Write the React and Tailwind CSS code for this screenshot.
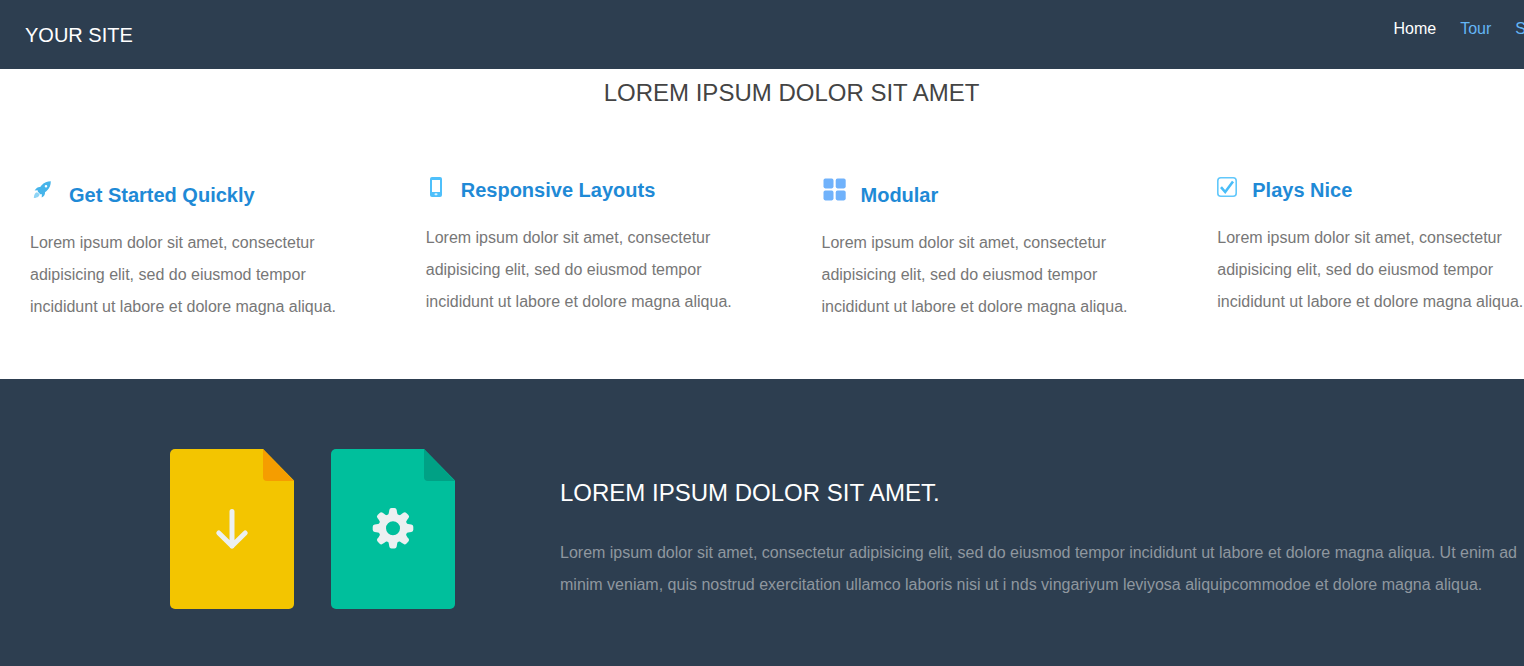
import React from "react";

function RocketIcon() {
  return (
    <svg viewBox="0 -1 24 24" className="h-6 w-6 shrink-0" aria-hidden="true">
      <path
        fillRule="evenodd"
        fill="#46b4ea"
        d="M20.8 3.2c-3.4.1-6.800 1-9.400 4.200L10.200 9C8.100 8.800 6.400 9.800 4.600 12.400l3-.1.3 1.500 2.400 2.400 1.600.1-.2 3.300c2.600-1.500 3.500-3.300 3.300-5.400l1.600-1.300c3.200-2.700 4.200-5.900 4.200-9.700zM16 7a1.300 1.300 0 1 1 0 2.600 1.300 1.300 0 0 1 0-2.600z"
      />
      <path fill="#8fd4f5" d="M7 14.200c-1.900.3-3 2.200-3.200 5.800 1 .2 1.700-.1 2.400-.5 1.300-.1 2-.6 2.500-1.300.6-.6.900-1.300.9-2.200z" />
    </svg>
  );
}

function PhoneIcon() {
  return (
    <svg viewBox="0 0 20 24" className="h-6 w-5 shrink-0" aria-hidden="true">
      <rect x="4" y="0" width="12" height="20" rx="2" fill="#4fc0fb" />
      <rect x="6" y="3" width="8" height="12" fill="#fff" />
      <rect x="8.500" y="16.300" width="3" height="2" rx="1" fill="#d8f2ff" />
    </svg>
  );
}

function GridIcon() {
  return (
    <svg viewBox="0 0 24 24" className="h-6 w-6 shrink-0" aria-hidden="true" fill="#70b2fb">
      <rect x="1.500" y="1.600" width="10" height="9.800" rx="1.800" />
      <rect x="13.700" y="1.600" width="10" height="9.800" rx="1.800" />
      <rect x="1.500" y="13.600" width="10" height="9.800" rx="1.800" />
      <rect x="13.700" y="13.600" width="10" height="9.800" rx="1.800" />
    </svg>
  );
}

function CheckIcon() {
  return (
    <svg viewBox="0 0 20 24" className="h-6 w-5 shrink-0" aria-hidden="true" fill="none">
      <rect x="0.800" y="0.800" width="18.400" height="18.400" rx="3" stroke="#62c8fb" strokeWidth="1.600" />
      <path d="M4 10.200l4.200 4.800 7.800-10.500" stroke="#49bdf8" strokeWidth="2.600" />
    </svg>
  );
}

function Sheet({ body, fold, children }) {
  return (
    <svg viewBox="0 0 124 160" className="h-40 w-[124px] shrink-0" aria-hidden="true">
      <path d="M5 0h88L124 31.500V155a5 5 0 0 1-5 5H5a5 5 0 0 1-5-5V5a5 5 0 0 1 5-5z" fill={body} />
      <path d="M93 0L124 32H97a4 4 0 0 1-4-4z" fill={fold} />
      {children}
    </svg>
  );
}

const teeth = [0, 45, 90, 135, 180, 225, 270, 315];

const blurb =
  "Lorem ipsum dolor sit amet, consectetur adipisicing elit, sed do eiusmod tempor incididunt ut labore et dolore magna aliqua.";

const features = [
  { title: "Get Started Quickly", Icon: RocketIcon, low: true },
  { title: "Responsive Layouts", Icon: PhoneIcon, low: false },
  { title: "Modular", Icon: GridIcon, low: true },
  { title: "Plays Nice", Icon: CheckIcon, low: false },
];

function Feature({ title, Icon, low }) {
  return (
    <article className="px-[30px]">
      <div className="flex items-start gap-[15px]">
        <Icon />
        <h3 className={low ? "pt-1 text-[20px] leading-7 font-bold text-[#1f8ad6]" : "text-[20px] leading-[27px] font-bold text-[#1f8ad6]"}>
          {title}
        </h3>
      </div>
      <p className="mt-[18px] text-[16px] leading-8 text-[#777]">{blurb}</p>
    </article>
  );
}

export default function App() {
  return (
    <div className="overflow-hidden bg-white font-['Liberation_Sans',Arial,sans-serif]">
      <div className="-mr-[59px]">
        <header className="flex items-start justify-between bg-[#2d3e50] pr-[57px] pl-[25px]">
          <a href="#" className="pt-5 pb-[19px] text-[20px] leading-[30px] text-white">
            YOUR SITE
          </a>
          <nav className="flex gap-6 pt-[17px] text-[16px] leading-6 text-[#64b5f6]">
            <a href="#" className="text-white">Home</a>
            <a href="#">Tour</a>
            <a href="#">S</a>
          </nav>
        </header>

        <main>
          <section className="pt-2 pb-14">
            <h2 className="text-center text-[24px] leading-8 text-[#444]">LOREM IPSUM DOLOR SIT AMET</h2>
            <div className="mt-[68px] grid grid-cols-4">
              {features.map((f) => (
                <Feature key={f.title} {...f} />
              ))}
            </div>
          </section>

          <section className="flex items-start bg-[#2d3e50] pt-[70px] pr-[30px] pb-20 pl-[170px]">
            <div className="flex shrink-0 gap-[37px]">
              <Sheet body="#f3c500" fold="#f59d00">
                <path
                  d="M62 62.500v34.500M48.800 84l13.200 13L75.200 84"
                  fill="none"
                  stroke="#ecf0f1"
                  strokeWidth="5"
                  strokeLinecap="round"
                  strokeLinejoin="round"
                />
              </Sheet>
              <Sheet body="#00bf9c" fold="#00a185">
                <g transform="translate(62 79.300)" fill="#ecf0f1">
                  <circle r="10.800" fill="none" stroke="#ecf0f1" strokeWidth="7.600" />
                  {teeth.map((a) => (
                    <path
                      key={a}
                      transform={`rotate(${a})`}
                      d="M-5.500-12C-4.300-14-4-16-3.700-18.300Q-3.400-20.300-1.500-20.300H1.500Q3.400-20.300 3.700-18.300C4-16 4.300-14 5.500-12z"
                    />
                  ))}
                </g>
              </Sheet>
            </div>
            <div className="ml-[105px] pt-7">
              <h2 className="text-[24px] leading-8 text-white">LOREM IPSUM DOLOR SIT AMET.</h2>
              <p className="mt-7 text-[16px] leading-8 text-[#8f979f]">
                Lorem ipsum dolor sit amet, consectetur adipisicing elit, sed do eiusmod tempor incididunt ut labore et
                dolore magna aliqua. Ut enim ad minim veniam, quis nostrud exercitation ullamco laboris nisi ut i nds
                vingariyum leviyosa aliquipcommodoe et dolore magna aliqua.
              </p>
            </div>
          </section>
        </main>
      </div>
    </div>
  );
}
